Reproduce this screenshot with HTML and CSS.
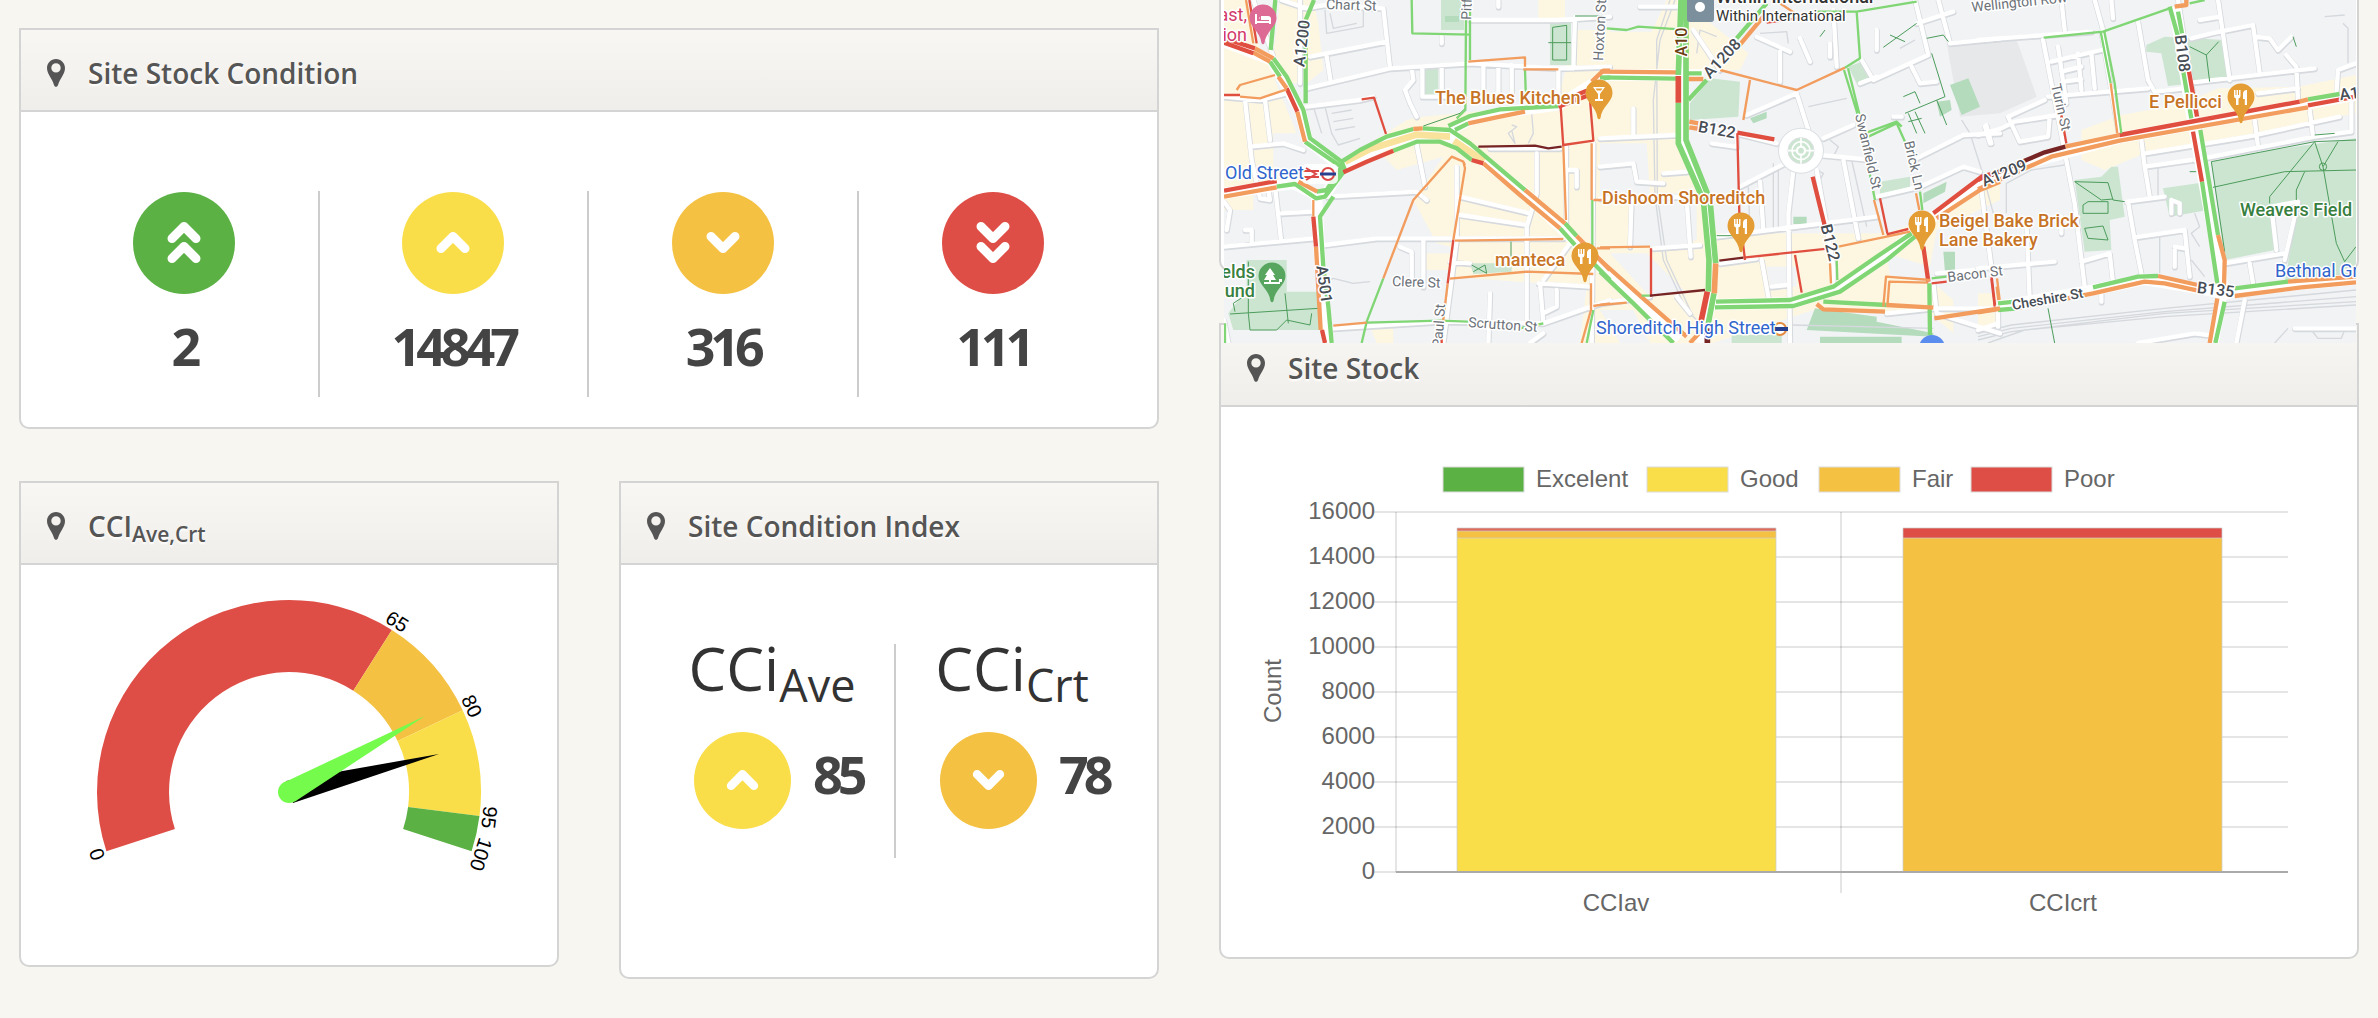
FILE: index.html
```html
<!DOCTYPE html>
<html lang="en">
<head>
  <meta charset="utf-8">
  <meta name="viewport" content="width=device-width, initial-scale=1">
  <title>Site Stock</title>
  <link rel="stylesheet" href="styles.css">
</head>
<body>
  <!-- shared icons -->
  <svg class="sprite" aria-hidden="true">
    <symbol id="marker" viewBox="0 0 18 28">
      <path fill-rule="evenodd" d="M9 0C4 0 0 4 0 9c0 6 5 10 7 17 .6 2.400 3.400 2.400 4 0 2-7 7-11 7-17 0-5-4-9-9-9zm0 4.200a4.700 4.700 0 1 1 0 9.400 4.700 4.700 0 0 1 0-9.400z"/>
    </symbol>
    <symbol id="up" viewBox="0 0 102 102"><path d="M39 56.500L51 44.500L63 56.500"/></symbol>
    <symbol id="down" viewBox="0 0 102 102"><path d="M39 44.500L51 56.500L63 44.500"/></symbol>
    <symbol id="up2" viewBox="0 0 102 102"><path d="M39 46.500L51 34.500L63 46.500M39 66.500L51 54.500L63 66.500"/></symbol>
    <symbol id="down2" viewBox="0 0 102 102"><path d="M39 34.500L51 46.500L63 34.500M39 54.500L51 66.500L63 54.500"/></symbol>
    <symbol id="pin" viewBox="-14 -14 28 42" overflow="visible">
      <path d="M0-13.500A13.500 13.500 0 0 0-13.500 0C-13.500 9-3 13-1.500 25Q0 27.500 1.500 25C3 13 13.500 9 13.500 0A13.500 13.500 0 0 0 0-13.500z"/>
    </symbol>
    <symbol id="food" viewBox="-14 -14 28 42" overflow="visible">
      <path fill="#fff" d="M-7-7h1.500v5h1v-5h1.500v5h1v-5h1.500v6q0 2-2 2.500V8h-2.500V1.500q-2-.5-2-2.500zM2 8V-3q0-4 4-4V8H3.800V2H2z"/>
    </symbol>
  </svg>

  <main class="dashboard">
    <div class="column column-left">
      <section class="card">
        <header class="card-header">
          <svg class="marker"><use href="#marker"/></svg>
          <h2>Site Stock Condition</h2>
        </header>
        <div class="stats">
          <div class="stat">
            <svg class="badge excellent"><use href="#up2"/></svg>
            <span class="number">2</span>
          </div>
          <div class="stat">
            <svg class="badge good"><use href="#up"/></svg>
            <span class="number">14847</span>
          </div>
          <div class="stat">
            <svg class="badge fair"><use href="#down"/></svg>
            <span class="number">316</span>
          </div>
          <div class="stat">
            <svg class="badge poor"><use href="#down2"/></svg>
            <span class="number">111</span>
          </div>
        </div>
      </section>

      <div class="row">
        <section class="card">
          <header class="card-header">
            <svg class="marker"><use href="#marker"/></svg>
            <h2>CCI<sub>Ave,Crt</sub></h2>
          </header>
          <svg class="gauge" viewBox="0 0 536 400" role="img" aria-label="CCI gauge">
            <g transform="translate(268 227)">
              <path fill="#de4e46" d="M-182.600 59.300A192 192 0 0 1 102.900-162.100L64.300-101.300A120 120 0 0 0-114.100 37.100Z"/>
              <path fill="#f4c142" d="M102.900-162.100A192 192 0 0 1 173.700-81.800L108.600-51.100A120 120 0 0 0 64.300-101.300Z"/>
              <path fill="#f9de4a" d="M173.700-81.800A192 192 0 0 1 190.500 24.100L119.100 15A120 120 0 0 0 108.600-51.100Z"/>
              <path fill="#5bb144" d="M190.500 24.100A192 192 0 0 1 182.600 59.300L114.100 37.100A120 120 0 0 0 119.100 15Z"/>
              <path fill="#000" d="M-3-11L150-38L4 11Z"/>
              <circle r="11" fill="#75fb4c"/>
              <path fill="#75fb4c" d="M-5-9.500L136-76L6 9.500Z"/>
              <g class="gauge-labels">
                <text transform="rotate(-108)" y="-195">0</text>
                <text transform="rotate(32.400)" y="-195">65</text>
                <text transform="rotate(64.800)" y="-195">80</text>
                <text transform="rotate(97.200)" y="-195">95</text>
                <text transform="rotate(108)" y="-195">100</text>
              </g>
            </g>
          </svg>
        </section>

        <section class="card">
          <header class="card-header">
            <svg class="marker"><use href="#marker"/></svg>
            <h2>Site Condition Index</h2>
          </header>
          <div class="index">
            <div class="index-item">
              <div class="index-name">CCi<sub>Ave</sub></div>
              <div class="index-value">
                <svg class="badge small good"><use href="#up"/></svg>
                <span class="number">85</span>
              </div>
            </div>
            <div class="index-item">
              <div class="index-name">CCi<sub>Crt</sub></div>
              <div class="index-value">
                <svg class="badge small fair"><use href="#down"/></svg>
                <span class="number">78</span>
              </div>
            </div>
          </div>
        </section>
      </div>
    </div>

    <div class="column column-right">
      <section class="card map-card">
        <svg class="map" viewBox="0 0 1132 343" role="img" aria-label="Traffic map of Shoreditch">
          <svg viewBox="0 0 3396 1029" width="1132" height="343">
            <defs>
              <path id="streets-west" transform="translate(-42)" d="M215 0L290 25L345 15L520 25M520 25L540 205M300 170L530 125M350 170L362 245M290 265L540 205L780 190L1045 205L1200 200M290 320L450 300L490 290M42 290L150 300L230 280M105 300L125 480L150 595L180 600L175 570M165 300L180 420M120 440L220 430L280 450M195 560L213 720M215 640L310 635M42 740L310 715M345 735L500 715L1060 715M605 205L610 240L585 270L600 310L620 350M637 205V290L760 290M695 205V290M820 195V290M865 195V290M905 195V300M780 60H1045L1200 50M1095 50L1090 205M1045 205V320M350 590L620 575L650 600M615 410L645 560M750 590L960 640M750 645L950 675M980 460V580L950 680V980M1050 445H840M640 720V860M570 740L605 755V850M720 785L780 790M840 880L835 1029M370 985L690 965L1000 970L1200 900M985 850L1140 860M990 850L1000 970M1080 730L1000 840M42 605L60 630L50 690M125 730V690H105M42 960L55 1029M270 0V250M740 500V720L700 1029M130 0L190 170M865 0V20M695 110V130M1000 940L1040 920V870M1150 430L1145 1029M1070 510H1100V560M1068 440V700M960 1029L1000 1000"/>
              <path id="streets-mid" transform="translate(1128)" d="M0 415L230 405M100 325V405M0 500L100 490L110 545L190 550M190 520L260 515M95 590L90 740M160 745L300 735M260 600L272 770M0 595L310 590M590 280L440 345M590 280L625 390M555 490L420 560M580 510L565 640L570 1029M660 465L820 480M480 545L490 690M350 710L830 650M730 480L775 715M335 430L405 440M485 780L505 890M515 860L560 855M0 910L150 890M230 890L270 940M785 180L820 240L985 165L945 0M935 200L960 250L1010 245M1015 0L1050 130L1200 115M950 70L1060 35M600 115L630 185M470 110L570 155M540 155V245M700 30L710 200M830 90V150M830 590L960 560L1090 500L1140 515M950 475L1090 405L1200 400M670 415L760 375M1155 380L1170 430M1000 850L1010 940L1200 1000M360 790L470 775M410 440V400L530 430M650 510L670 620L700 800V850M780 250L830 230M860 940L1000 925L1200 925M280 90L360 210M1010 820L1120 810M120 20H260M880 350H905M690 130V170"/>
              <path id="streets-east" transform="translate(2262)" d="M0 120L340 95M195 120L290 610L320 860M240 140L265 310M220 185L370 150M250 215L310 200M300 160L310 270M340 160L350 265M255 245L310 238M210 290L510 265M350 0L375 90M250 0L260 90M400 0L405 55M480 65L510 240L530 275L620 265M620 250L1010 205M720 0L755 240M640 115L700 100L825 75L845 220M830 110L875 115L900 150L940 110M925 165L955 200L960 300M1075 280L1080 210L1134 190M665 60L725 50M90 350L200 300M90 350L125 425L210 410L215 350M0 405L70 385L110 365L240 345M25 375L40 430M490 420L500 500L515 590M500 500L640 480M500 460L810 410L1085 350M830 360L840 440M995 330L1005 410M650 480L1010 410L1120 395V300M445 605L560 590M450 605L470 720L490 820M470 712L620 690L635 830M580 600V640M580 600L605 610V640M590 740L620 745M590 750V800M0 805L230 785M310 785L395 760L405 850M145 660L155 900M370 880V905M815 790L825 850M740 790L920 760M880 620L895 750M960 605L920 780M880 620L960 605M800 900L775 1029M950 985H1134M480 1029L650 1000L690 1005M10 570L40 800M60 920V980M0 990L60 970M250 650V700M840 280L960 265M370 95L425 420M600 0L735 850L700 1029"/>
            </defs>

            <rect width="3396" height="1029" fill="#f1f3f5"/>
            <!-- built up areas -->
            <g fill="#fdf7e2">
              <path transform="translate(-42)" d="M42 130L170 180L260 400H190V500L280 520V570L130 560V630H42ZM42 0H110L150 150L42 120ZM210 0H310L325 70L340 210L290 250H230L190 160ZM480 430L590 360L640 350L1040 310L1100 90H1200V1029H1110L1130 860L720 830V740L680 730L610 600L700 470L560 510ZM985 0H1065V65H985ZM640 760V810H720V760ZM480 980H550V1029H500Z"/>
              <path transform="translate(1128)" d="M0 95H155L200 0H240L320 60L445 160L420 210L270 215L240 240V440L330 620L350 700L860 700L1000 650L1100 570L1200 530V600L1010 690L990 800L860 760L870 830L1000 850L1060 900V1000L990 940L640 930L340 1029H0Z"/>
              <path transform="translate(2262)" d="M310 390L430 345L620 310L720 265L960 260L1134 225V340L830 400L500 460L380 510L310 480ZM0 880H55V970L0 990Z"/>
            </g>
            <g fill="#f1f3f5" transform="translate(1128)">
              <path d="M0 430H140L150 590H0ZM100 600H250L270 740H90ZM30 760H140L260 880L150 890ZM185 580H290V720L200 740ZM0 930H100L150 1029H60Z"/>
              <path d="M500 800H590V860H510Z"/>
            </g>
            <path fill="#e6e8ea" transform="translate(1128)" d="M1040 130L1250 120L1310 290L1200 340L1080 350Z"/>
            <!-- parks -->
            <g fill="#cbe5d0">
              <path transform="translate(-42)" d="M693 0H762V90H693ZM642 202H685V288H642ZM1020 60H1083V195H1020ZM110 780H230V875H325L350 990H70L55 940L110 870ZM780 790H905V815L790 822Z"/>
              <path transform="translate(1128)" d="M270 310L330 235L420 245L415 350L270 360ZM745 200L785 185L820 240L775 260ZM840 545L930 530V565L840 585ZM395 1005H545V1029H395Z"/>
              <path transform="translate(2262)" d="M505 135L560 110L740 120L748 240L570 258L550 160L505 155ZM290 540L370 530L400 500H420L440 650L395 660L400 750L320 755ZM555 565L670 548L690 630L575 650ZM700 485L880 450L1134 415V790L1100 850H920L960 605L880 620L890 750L740 780Z"/>
            </g>
            <g fill="#b4dbbc" transform="translate(1128)">
              <path d="M1050 255L1105 235L1140 320L1085 345ZM1010 305L1050 300L1055 330L1020 350ZM450 355L500 335V355L460 370ZM1040 545L1035 575L970 610V580ZM580 650H620V672H580ZM1030 755H1065V815H1035ZM645 925L830 950V965L1000 1000V1010L620 990ZM660 1010H905V1029H660ZM-465 48H-423V66H-465Z"/>
            </g>
            <!-- railways, lanes and car parks -->
            <g class="lanes">
              <path transform="translate(-42)" d="M345 30L350 100L460 80V20M360 40L370 85L440 70M310 320L335 400M345 320L365 400L385 435L450 415M365 340L425 330M370 365L430 355M375 390L435 380M905 375L920 380L895 400L915 430L905 390M350 845L370 835L430 850L480 845M965 340L970 400L955 430"/>
              <path transform="translate(1128)" d="M225 0L180 120L160 300L165 590L190 780L260 930L330 1000M210 0L170 120L172 590L200 780L275 940M625 320L740 295M520 490V690M535 500V680M1085 360L1110 400L1145 510L1180 640M290 160L300 90L350 110M480 100L560 95L565 130M650 510L670 520L660 540M690 420L715 440L700 470M445 560L450 700M755 480L800 680M575 975L1000 985M900 145L945 120"/>
              <path transform="translate(2262)" d="M0 1000L100 975L560 925L1134 870M0 1010L100 985L560 935L1134 890M0 1020L100 995L560 940L1134 905M30 1029L140 990L560 950L1134 915M1095 70L1110 85V190M85 640V550L160 510L260 495M545 705V820M650 640L665 680L640 700L665 740M640 780L680 830M890 1029L930 985M1000 990L1020 1015H1090L1100 990M1040 50L1100 45M540 500V590"/>
            </g>
            <g class="casing"><use href="#streets-west"/><use href="#streets-mid"/><use href="#streets-east"/></g>
            <g class="street"><use href="#streets-west"/><use href="#streets-mid"/><use href="#streets-east"/></g>
            <g transform="translate(1731 452)">
              <circle r="69" fill="#dcdfe3"/>
              <circle r="66" fill="#fff"/>
              <circle r="39" fill="#cbe5d0" stroke="#dcdfe3" stroke-width="3"/>
              <circle r="27" fill="none" stroke="#fff" stroke-width="5"/>
              <circle r="12" fill="none" stroke="#fff" stroke-width="7"/>
              <path d="M0-39V-14M0 14V39M-39 0H-14M14 0H39" stroke="#fff" stroke-width="5"/>
            </g>
            <g class="paths">
              <path transform="translate(-42)" d="M640 378L750 340L766 325M1015 128H1083M1028 82L1070 76V180H1028ZM60 942L325 925M115 785V940L120 990L200 990L230 960L300 975L305 940M225 880L235 970M115 880L70 910L75 935M785 795L830 820L825 795L790 815M903 725V790M1095 48H1180"/>
              <path transform="translate(1128)" d="M850 142L950 70M870 105L915 125M980 115L1030 105L1045 125M995 160L1035 290L915 340M910 290L945 275L960 310M1010 300L1040 375M925 340L950 400M945 335L975 400M925 365L965 355M660 110L675 90M350 707H400"/>
              <path transform="translate(2262)" d="M635 140L685 165L722 125M685 165L695 245M705 562L920 515L1134 510M700 485L740 755M700 485L1010 425L1134 420M1010 425L875 590V610M1010 425L1035 500L1075 730L1100 785L1134 740M1080 425L1035 500M980 515L955 570V600M290 545L390 548L405 600L440 605M290 545L370 600L405 597M330 605H390V640H315V615ZM320 685L375 678L390 720L330 715ZM945 110L955 140M210 925L230 1029M1010 405L1070 400M635 515H665"/>
              <circle cx="3297" cy="500" r="11"/>
            </g>

            <!-- main roads, white bed under the two lanes -->
            <g class="bed">
              <path transform="translate(-42)" d="M42 125L185 180L270 330L292 420L395 500L530 430L620 405L710 405L780 450L945 580L1200 825M42 580L250 550L320 585L350 580L395 500M320 590L330 800L355 1029M720 390L780 360L870 338L1045 315L1200 220"/>
              <path transform="translate(1128)" d="M250 0L247 430L320 600L338 780L335 900L300 1029M348 914L580 908L710 868L850 775L1000 650L1150 550L1200 525M0 800L240 1015M0 225H310"/>
              <path transform="translate(2262)" d="M0 555L145 490L425 414L1134 285M60 920L345 870L500 838L660 865L740 880L970 852L1134 838M590 20L640 340L735 860L705 1029"/>
            </g>
            <g fill="none" stroke="#f9e29c" stroke-width="20">
              <path transform="translate(-42)" d="M405 485L480 447L620 404L720 410M732 422L822 484"/>
            </g>

            <g class="traffic">
              <g class="fast">
                <path transform="translate(-42)" d="M190 175L230 230L280 330L300 415L395 485M180 185L210 230M285 425L400 505M395 485L405 510L345 590L318 595L255 552L200 560M320 575L350 570L395 500M370 590L330 650L340 800L355 920L365 1029M395 485L450 450L530 410L610 387M638 385L720 390L780 430L945 570M1065 670L1100 708M550 452L620 425L690 425L740 445L785 480M1050 685L1095 735M1150 790L1200 840M715 378L780 348L870 328L1045 318M735 390L775 370M312 0L287 60V310M196 0L182 150M1180 235L1200 232"/>
                <path transform="translate(1128)" d="M500 10L410 115M262 220H305M265 300L320 240M0 232L228 236M348 905L570 900L700 860L830 770L935 700M345 922L580 918L720 875L860 780L945 710M0 815L100 910L220 1029M670 905L860 915M988 850L990 1005"/>
                <path transform="translate(2262)" d="M575 20L600 110M600 35L612 100M615 210L640 355M672 545L718 850M667 390L720 705M740 905L712 1029M990 298L1085 282M345 862L480 830L540 828M770 865L930 845M60 910L110 905M60 930L110 926"/>
              </g>
              <g class="slow">
                <path transform="translate(-42)" d="M135 145L190 175M130 158L180 185M205 230L230 265M262 335L285 425M265 545L322 575M42 590L200 562M610 387L638 385M945 570L1065 670M1100 708L1200 810M820 490L930 585L1050 685M775 370L870 350L945 335M1145 245L1180 212H1200M318 740L332 990"/>
                <path transform="translate(1128)" d="M490 50L415 140M265 237H310M0 215L228 217M0 780L140 905L260 1010M268 365L295 370M268 382L300 387M1010 655L1140 570L1200 545M860 915L1000 923M650 912L670 928L855 935M1003 955L1200 925M325 970L270 1029"/>
                <path transform="translate(2262)" d="M262 440L425 405M965 305L990 298M0 568L130 510L220 470L425 422L990 322M720 705L740 780L738 860M718 895L695 1029M590 20L625 15V0M540 828L660 855M110 926L345 880L500 845L560 850L660 872M930 845L1134 830M770 888L970 862L1134 847"/>
              </g>
              <g class="jam">
                <path transform="translate(-42)" d="M42 115L135 145M42 128L130 160M230 265L262 335M42 572L200 543M400 517L470 485L550 452M785 480L820 490M310 650L318 740M336 990L345 1029M1045 320L1130 288M1050 305L1130 272"/>
                <path transform="translate(1128)" d="M412 398L523 418M638 530L675 680M1000 640L1145 530L1200 515M970 740L985 845"/>
                <path transform="translate(2262)" d="M425 405L965 305M990 316L1134 290M633 215L657 350M645 395L672 545M0 540L20 530"/>
              </g>
              <path class="stopped" transform="translate(2262)" d="M40 525L145 480L200 457L262 440"/>
            </g>
            <g class="traffic wide" transform="translate(1128)">
              <path class="fast" d="M243 0L235 225M235 308V430L310 600L327 780L325 875M258 0V420L330 600L347 790M342 880L325 970"/>
              <path class="slow" d="M347 790L343 880"/>
              <path class="jam" d="M235 228V308M322 875L302 970"/>
              <path class="stopped" d="M322 985V1029"/>
            </g>
            <g class="traffic thin">
              <g class="fast">
                <path transform="translate(-42)" d="M605 0L607 100L780 104M768 60L766 330L740 355M780 0V180M945 210L948 300M1147 600V740M520 835L470 965L455 1029M470 968L690 962L775 965M930 985L1000 970M1150 930L1130 1029M45 970V1029"/>
                <path transform="translate(1128)" d="M735 203L780 175L770 35L650 35M770 35L950 5M20 85L80 90L115 80L240 88M732 210L775 350L825 600M744 205L780 350M805 410L890 370L915 425M800 398L890 365L905 380M960 575L967 630M710 780L712 840M125 887H150M995 835L1040 830"/>
                <path transform="translate(2262)" d="M197 113L375 95L575 25M368 95L398 250M379 95L410 250L430 400M635 10L680 0"/>
              </g>
              <g class="slow">
                <path transform="translate(-42)" d="M108 0L130 130M775 185L945 172V200M940 208H1045M80 270L90 255L195 225M90 290L150 295L230 268M1060 440L1068 660M1145 430V600M1160 745H1200M1150 600H1180M765 495L760 485L725 470L610 600L520 835M760 485L765 505L730 720M713 850L695 1000M370 977L470 968M735 722L1060 717M720 836L950 815L1150 822M1143 850V930L1115 1029M1150 918L1200 910M310 600V650"/>
                <path transform="translate(1128)" d="M360 210L590 270L735 203M540 10L600 50M450 240L430 360M690 790L693 850M690 745L860 710L930 695M822 600L850 705M948 580L958 630M990 840L858 830L850 920M985 848L868 845L862 920M0 742L150 740M0 915L80 908M1190 860L1195 900"/>
                <path transform="translate(2262)" d="M398 250L418 400M57 835L65 900M0 940L60 930"/>
              </g>
              <g class="jam">
                <path transform="translate(-42)" d="M118 0L140 130M42 285L90 285M455 298L492 293L528 402M1060 435L1150 422L1140 300M1052 320L1060 440M730 720L713 850M695 1000V1029"/>
                <path transform="translate(1128)" d="M500 68L590 55M412 400L418 640L435 780M430 773L690 745M860 703L925 687M585 765L605 878M840 595L862 700M153 745V890M1175 830L1185 915M995 850L1040 845"/>
                <path transform="translate(2262)" d="M250 345L265 430M40 835L50 920"/>
              </g>
              <g class="stopped">
                <path transform="translate(-42)" d="M805 440L975 437L1015 445L1055 440"/>
                <path transform="translate(1128)" d="M358 782L430 773M150 887L315 870"/>
              </g>
            </g>
          </svg>

          <!-- pins -->
          <g>
            <use href="#pin" x="25" y="4" width="28" height="42" fill="#dd6a94"/>
            <path d="M32 14V24M32 22H46V24M46 22V19H38V17H44Q46 17 46 19M35 18H35.500" stroke="#fff" stroke-width="2" fill="none"/>
            <use href="#pin" x="361" y="79" width="28" height="42" fill="#e49c35"/>
            <path d="M369 87H381L376 94V99H379V101H371V99H374V94ZM371.500 88.500L373 90.500H377L378.500 88.500Z" fill="#fff" fill-rule="evenodd"/>
            <use href="#pin" x="34" y="262" width="28" height="42" fill="#57a55f"/>
            <path d="M46 268L51 275H49L52 280H47V282H55V279H58V282H56V284H40V282H45V280H40L43 275H41Z" fill="#fff"/>
            <use href="#pin" x="347" y="242" width="28" height="42" fill="#e49c35"/>
            <use href="#food" x="347" y="242" width="28" height="42"/>
            <use href="#pin" x="503" y="212" width="28" height="42" fill="#e49c35"/>
            <use href="#food" x="503" y="212" width="28" height="42"/>
            <use href="#pin" x="684" y="210" width="28" height="42" fill="#e49c35"/>
            <use href="#food" x="684" y="210" width="28" height="42"/>
            <use href="#pin" x="1003" y="83" width="28" height="42" fill="#e49c35"/>
            <use href="#food" x="1003" y="83" width="28" height="42"/>
            <rect x="463" y="-8" width="27" height="30" rx="3" fill="#7b8f9d"/>
            <circle cx="476" cy="7" r="5" fill="#fff"/>
            <circle cx="708" cy="348" r="13" fill="#5b8def"/>
            <rect x="78" y="164" width="36" height="20" rx="5" fill="#fff" fill-opacity=".85"/>
            <path d="M79 171H95M79 177H95M82 168L92 174L82 180" stroke="#dc4a48" stroke-width="2" fill="none"/>
            <circle cx="104" cy="174" r="6" fill="#fff" stroke="#dc4a48" stroke-width="2"/>
            <path d="M96 174H112" stroke="#263f8f" stroke-width="3"/>
            <circle cx="556" cy="329" r="6" fill="#fff" stroke="#e58b3f" stroke-width="2"/>
            <path d="M548 329H564" stroke="#263f8f" stroke-width="4"/>
          </g>

          <g class="place food-place">
            <text x="211" y="104">The Blues Kitchen</text>
            <text x="271" y="266">manteca</text>
            <text x="378" y="204">Dishoom Shoreditch</text>
            <text x="715" y="227">Beigel Bake Brick</text>
            <text x="715" y="246">Lane Bakery</text>
            <text x="925" y="108">E Pellicci</text>
          </g>
          <g class="place hotel-place">
            <text x="23" y="21" text-anchor="end">ast,</text>
            <text x="23" y="41" text-anchor="end">ion</text>
          </g>
          <g class="place park-place">
            <text x="31" y="278" text-anchor="end">elds</text>
            <text x="31" y="297" text-anchor="end">und</text>
            <text x="1016" y="216">Weavers Field</text>
          </g>
          <g class="place station">
            <text x="1" y="179">Old Street</text>
            <text x="372" y="334">Shoreditch High Street</text>
            <text x="1051" y="277">Bethnal Gre</text>
          </g>
          <g class="place office">
            <text x="492" y="3" class="office-name">Within International</text>
            <text x="492" y="21">Within International</text>
          </g>
          <g class="place road">
            <text transform="translate(83 44) rotate(-83)">A1200</text>
            <text transform="translate(95 285) rotate(82)">A501</text>
            <text class="trunk" transform="translate(463 42) rotate(-90)">A10</text>
            <text transform="translate(502 62) rotate(-47)">A1208</text>
            <text transform="translate(492 135) rotate(10)">B122</text>
            <text transform="translate(601 244) rotate(76)">B122</text>
            <text transform="translate(953 54) rotate(83)">B108</text>
            <text transform="translate(782 178) rotate(-22)">A1209</text>
            <text transform="translate(991 295) rotate(7)">B135</text>
            <text transform="translate(1126 99) rotate(-8)">A1</text>
          </g>
          <g class="place street-name">
            <text transform="translate(102 9) rotate(2)">Chart St</text>
            <text transform="translate(247 20) rotate(-88)">Pitfield St</text>
            <text transform="translate(379 61) rotate(-87)">Hoxton St</text>
            <text transform="translate(168 286) rotate(2)">Clere St</text>
            <text transform="translate(244 327) rotate(4)">Scrutton St</text>
            <text transform="translate(218 348) rotate(-86)">Paul St</text>
            <text transform="translate(631 115) rotate(77)">Swanfield St</text>
            <text transform="translate(680 142) rotate(77)">Brick Ln</text>
            <text transform="translate(748 12) rotate(-6)">Wellington Row</text>
            <text transform="translate(827 85) rotate(77)">Turin St</text>
            <text transform="translate(724 282) rotate(-7)">Bacon St</text>
            <text class="dark" transform="translate(789 310) rotate(-10)">Cheshire St</text>
          </g>
        </svg>
      </section>

      <section class="card">
        <header class="card-header">
          <svg class="marker"><use href="#marker"/></svg>
          <h2>Site Stock</h2>
        </header>
        <svg class="chart" viewBox="0 0 1136 550" role="img" aria-label="Stacked bar chart of site stock by condition">
          <g stroke="#000" stroke-opacity=".1" stroke-width="2">
            <path d="M153 105H1067M153 150H1067M153 195H1067M153 240H1067M153 285H1067M153 330H1067M153 375H1067M153 420H1067M153 465H1067" fill="none"/>
            <path d="M175 105V465M620 105V486" fill="none"/>
          </g>

          <rect x="236" y="131" width="319" height="334" fill="#f9de4a"/>
          <rect x="236" y="124" width="319" height="7" fill="#f4c142"/>
          <rect x="236" y="121" width="319" height="3" fill="#de6a5c"/>
          <rect x="682" y="131" width="319" height="334" fill="#f4c142"/>
          <rect x="682" y="121" width="319" height="10" fill="#de4e46"/>
          <path class="bar-edge" d="M236 465V121H555V465M236 131H555M236 124H555M682 465V121H1001V465M682 131H1001"/>
          <path d="M175 465H1067" stroke="#aaa" stroke-width="2"/>

          <g class="legend-box">
            <rect x="222" y="60" width="81" height="25" fill="#5bb144"/>
            <rect x="426" y="60" width="81" height="25" fill="#f9de4a"/>
            <rect x="598" y="60" width="81" height="25" fill="#f4c142"/>
            <rect x="750" y="60" width="81" height="25" fill="#de4e46"/>
          </g>
          <g class="chart-text">
            <text x="315" y="80">Excelent</text>
            <text x="519" y="80">Good</text>
            <text x="691" y="80">Fair</text>
            <text x="843" y="80">Poor</text>
          </g>
          <g class="chart-text" text-anchor="end">
            <text x="154" y="112">16000</text>
            <text x="154" y="157">14000</text>
            <text x="154" y="202">12000</text>
            <text x="154" y="247">10000</text>
            <text x="154" y="292">8000</text>
            <text x="154" y="337">6000</text>
            <text x="154" y="382">4000</text>
            <text x="154" y="427">2000</text>
            <text x="154" y="472">0</text>
          </g>
          <g class="chart-text" text-anchor="middle">
            <text x="395" y="504">CCIav</text>
            <text x="842" y="504">CCIcrt</text>
            <text transform="translate(60 284) rotate(-90)">Count</text>
          </g>
        </svg>
      </section>
    </div>
  </main>
</body>
</html>
```
FILE: styles.css
```css
* {
  box-sizing: border-box;
}

body {
  margin: 0;
  background: #f7f6f1;
  font-family: 'Open Sans', 'Noto Sans', sans-serif;
  color: #444;
}

svg {
  display: block;
}

.sprite {
  position: absolute;
  width: 0;
  height: 0;
}

.dashboard {
  display: grid;
  grid-template-columns: 1fr 1fr;
  gap: 60px;
  padding: 0 19px;
}

.column {
  display: flex;
  flex-direction: column;
  gap: 52px;
  min-width: 0;
}

.column-left {
  padding-top: 28px;
}

.row {
  display: grid;
  grid-template-columns: 1fr 1fr;
  gap: 60px;
  align-items: start;
}

/* cards */
.card {
  background: #fff;
  border: 2px solid #d4d4d4;
  border-radius: 0 0 10px 10px;
}

.card-header {
  display: flex;
  align-items: center;
  gap: 23px;
  height: 82px;
  padding: 6px 26px 0;
  border-bottom: 2px solid #d4d4d4;
  background: linear-gradient(#f8f7f3, #f0eeea);
}

.card-header h2 {
  margin: 0;
  font-size: 28px;
  font-weight: 600;
  line-height: 36px;
  color: #555;
  text-shadow: 0 2px 2px #fff;
}

.marker {
  width: 18px;
  height: 28px;
  fill: #555;
}

sub {
  position: relative;
  bottom: -0.25em;
  font-size: 75%;
  line-height: 0;
  vertical-align: baseline;
}

/* badges */
.badge {
  width: 102px;
  height: 102px;
  border-radius: 50%;
  fill: none;
  stroke: #fff;
  stroke-width: 9;
  stroke-linecap: round;
  stroke-linejoin: round;
}

.badge.small {
  width: 97px;
  height: 97px;
}

.excellent { background: #5bb144; }
.good { background: #f9de4a; }
.fair { background: #f4c142; }
.poor { background: #de4e46; }

.number {
  font-size: 52px;
  font-weight: 700;
  line-height: 60px;
  letter-spacing: -5px;
  color: #444;
}

/* stock condition */
.stats {
  display: grid;
  grid-template-columns: repeat(4, 1fr);
  padding: 79px 29px 30px;
}

.stat {
  display: flex;
  flex-direction: column;
  align-items: center;
  gap: 22px;
  height: 206px;
  padding-top: 1px;
  border-right: 2px solid #ccc;
}

.stat:last-child {
  border-right: 0;
}

/* condition index */
.index {
  display: grid;
  grid-template-columns: 53fr 50fr;
  padding: 79px 29px 119px;
}

.index-item {
  height: 214px;
}

.index-item:first-child {
  border-right: 2px solid #ccc;
}

.index-name {
  text-align: center;
  font-size: 60px;
  line-height: 48px;
  color: #333;
}

.index-value {
  display: flex;
  gap: 22px;
  padding: 40px 0 0 44px;
}

.index-value .number {
  padding-top: 12px;
}

.gauge,
.chart {
  width: 100%;
  height: auto;
}

.gauge-labels {
  font-family: 'Liberation Sans', Arial, sans-serif;
  font-size: 20px;
  text-anchor: middle;
}

/* chart */
.chart-text {
  font-family: 'Liberation Sans', Arial, sans-serif;
  font-size: 24px;
  fill: #666;
}

.legend-box {
  stroke: #dcdcdc;
  stroke-width: 1;
}

.bar-edge {
  fill: none;
  stroke: #ccc;
  stroke-opacity: .7;
}

/* map: the drawing is taller than its card and covers the gap below */
.map-card {
  height: 271px;
  padding: 0 1px 0 3px;
  border-top: 0;
}

.map {
  position: relative;
  z-index: 1;
  width: 100%;
  height: auto;
}

.casing,
.street,
.lanes,
.paths,
.bed,
.traffic {
  fill: none;
  stroke-linejoin: round;
}

.casing {
  stroke: #d6d9dd;
  stroke-width: 17;
  stroke-linecap: round;
  transform: translate(1px, 3px);
}

.street {
  stroke: #fff;
  stroke-width: 13;
  stroke-linecap: round;
}

.lanes {
  stroke: #d5d8dc;
  stroke-width: 4;
}

.paths {
  stroke: #4d9c5c;
  stroke-width: 3;
}

.bed {
  stroke: #fff;
  stroke-width: 34;
}

.traffic { stroke-width: 13; }
.traffic.wide { stroke-width: 17; }
.traffic.thin { stroke-width: 7; }

.fast { stroke: #80d674; }
.slow { stroke: #f29c5e; }
.jam { stroke: #e04e40; }
.stopped { stroke: #772424; }

.place {
  font-family: Roboto, sans-serif;
  font-size: 18px;
  paint-order: stroke;
  stroke: #fff;
  stroke-width: 3px;
  stroke-linejoin: round;
}

.food-place {
  fill: #c77326;
  font-weight: 500;
}

.hotel-place { fill: #d33a68; }
.park-place { fill: #38803f; font-weight: 500; }
.station { fill: #3065cc; }

.office {
  font-size: 15px;
  fill: #333;
}

.office-name {
  font-size: 18px;
  font-weight: 500;
}

.road {
  font-size: 16px;
  font-weight: 500;
  fill: #474d55;
  text-anchor: middle;
}

.trunk { fill: #6b3f12; }

.street-name {
  font-size: 14px;
  fill: #6c7178;
}

.dark { fill: #474d55; font-weight: 500; }
```
